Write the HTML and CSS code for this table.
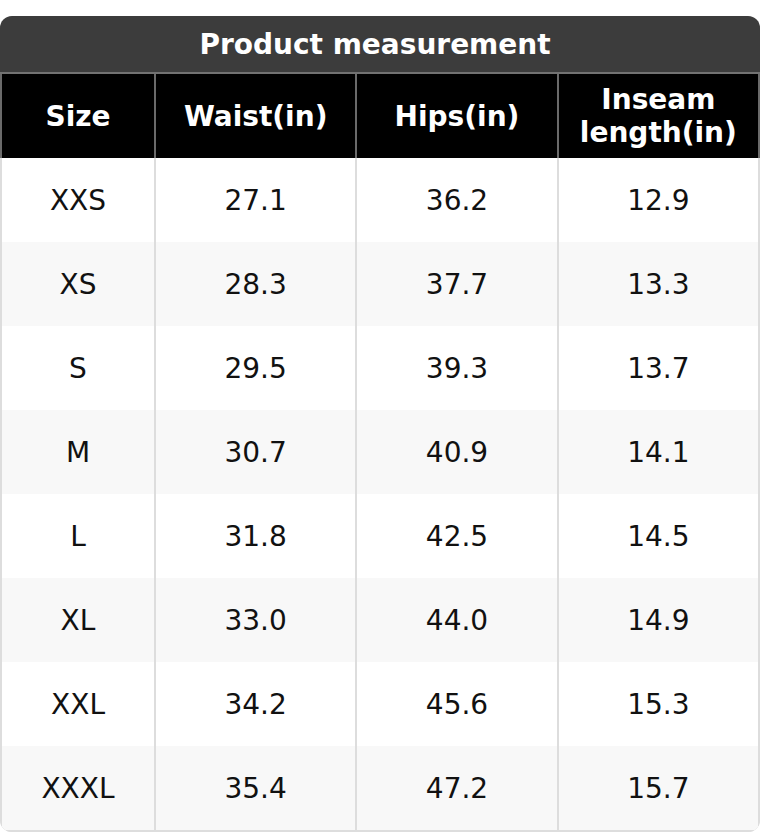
FILE: index.html
```html
<!DOCTYPE html>
<html>
<head>
<meta charset="utf-8">
<link rel="stylesheet" href="styles.css">
</head>
<body>
<div class="chart">
  <div class="title">Product measurement</div>
  <div class="row head">
    <div class="cell">Size</div>
    <div class="cell">Waist(in)</div>
    <div class="cell">Hips(in)</div>
    <div class="cell">Inseam<br>length(in)</div>
  </div>
  <div class="row"><div class="cell">XXS</div><div class="cell">27.1</div><div class="cell">36.2</div><div class="cell">12.9</div></div>
  <div class="row alt"><div class="cell">XS</div><div class="cell">28.3</div><div class="cell">37.7</div><div class="cell">13.3</div></div>
  <div class="row"><div class="cell">S</div><div class="cell">29.5</div><div class="cell">39.3</div><div class="cell">13.7</div></div>
  <div class="row alt"><div class="cell">M</div><div class="cell">30.7</div><div class="cell">40.9</div><div class="cell">14.1</div></div>
  <div class="row"><div class="cell">L</div><div class="cell">31.8</div><div class="cell">42.5</div><div class="cell">14.5</div></div>
  <div class="row alt"><div class="cell">XL</div><div class="cell">33.0</div><div class="cell">44.0</div><div class="cell">14.9</div></div>
  <div class="row"><div class="cell">XXL</div><div class="cell">34.2</div><div class="cell">45.6</div><div class="cell">15.3</div></div>
  <div class="row alt last"><div class="cell">XXXL</div><div class="cell">35.4</div><div class="cell">47.2</div><div class="cell">15.7</div></div>
</div>
</body>
</html>
```
FILE: styles.css
```css
html, body {
  margin: 0;
  padding: 0;
  background: #fff;
}
body {
  padding-top: 16px;
  font-family: "DejaVu Sans", Verdana, sans-serif;
}
.chart {
  width: 760px;
  border-radius: 12px;
  overflow: hidden;
  background: #dddddd;
}
.title {
  height: 56px;
  padding-right: 10px;
  background: #3c3c3c;
  color: #fff;
  font-weight: bold;
  font-size: 28px;
  display: flex;
  align-items: center;
  justify-content: center;
  border-bottom: 2px solid #727272;
}
.row {
  display: grid;
  grid-template-columns: 152px 1fr 1fr 1fr;
  column-gap: 2px;
  padding: 0 2px;
  height: 84px;
  background: #dddddd;
}
.row.last {
  padding-bottom: 2px;
}
.cell {
  display: flex;
  align-items: center;
  justify-content: center;
  text-align: center;
  background: #ffffff;
  color: #111;
  font-size: 28px;
  line-height: 33px;
}
.row.alt .cell {
  background: #f8f8f8;
}
.row.head {
  background: #6a6a6a;
}
.row.head .cell {
  background: #000;
  color: #fff;
  font-weight: bold;
}
```
